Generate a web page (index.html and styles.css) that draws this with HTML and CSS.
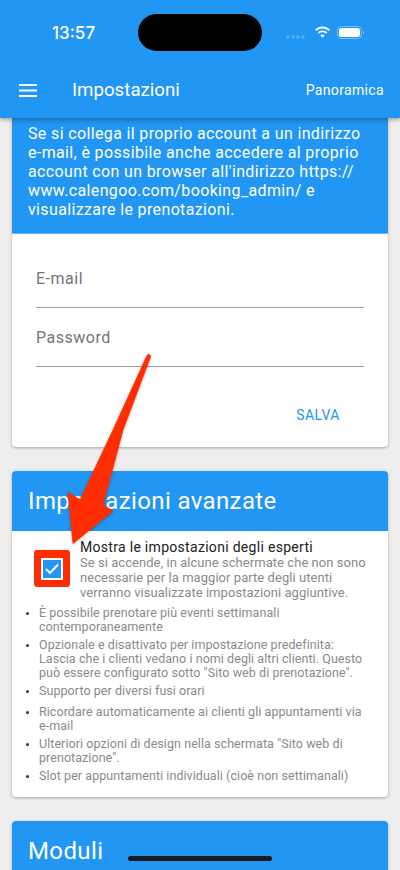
FILE: index.html
```html
<!DOCTYPE html>
<html lang="it">
<head>
<meta charset="utf-8">
<title>Impostazioni</title>
<link rel="stylesheet" href="styles.css">
</head>
<body>
<div class="screen">
  <header class="appbar">
    <div class="status">
      <span class="time">13:57</span>
      <div class="island"></div>
      <div class="status-icons">
        <svg class="signal" width="20" height="4" viewBox="0 0 20 4"><g fill="#fff" opacity=".25"><circle cx="2" cy="2" r="1.700"/><circle cx="7" cy="2" r="1.700"/><circle cx="12" cy="2" r="1.700"/><circle cx="17" cy="2" r="1.700"/></g></svg>
        <svg width="17" height="13" viewBox="0 0 17 13"><path d="M8.500 2.400c2.400 0 4.500.9 6.200 2.500l1.200-1.300C13.900 1.700 11.300.6 8.500.6S3.100 1.700 1.100 3.600l1.200 1.300C4 3.300 6.100 2.400 8.500 2.400zM8.500 6.300c1.300 0 2.500.5 3.500 1.400l1.200-1.300C12 5.200 10.300 4.500 8.500 4.500S5 5.200 3.800 6.400L5 7.700c1-.9 2.200-1.400 3.500-1.400zM8.500 8.400c-.9 0-1.600.3-2.200.9l2.200 2.400 2.200-2.400c-.6-.6-1.300-.9-2.200-.9z" fill="#fff"/></svg>
        <svg width="27" height="13" viewBox="0 0 27 13"><rect x=".5" y=".5" width="24" height="12" rx="3.800" fill="none" stroke="#fff" stroke-opacity=".4"/><rect x="2" y="2" width="21" height="9" rx="2.500" fill="#fff"/><path d="M26 4.800c.6.300 1 .9 1 1.700s-.4 1.400-1 1.700z" fill="#fff" fill-opacity=".4"/></svg>
      </div>
    </div>
    <div class="toolbar">
      <svg class="menu" width="18" height="13" viewBox="0 0 18 13"><path d="M0 0h18v2H0zM0 5.500h18v2H0zM0 11h18v2H0z" fill="#fff"/></svg>
      <h1 class="title">Impostazioni</h1>
      <span class="action">Panoramica</span>
    </div>
  </header>
  <main class="content">
    <section class="card card-first">
      <div class="card-info">Se si collega il proprio account a un indirizzo e-mail, è possibile anche accedere al proprio account con un browser all'indirizzo https://<br>www.calengoo.com/booking_admin/ e visualizzare le prenotazioni.</div>
      <form class="form">
        <div class="field">E-mail</div>
        <div class="field">Password</div>
        <div class="form-actions"><span class="save">SALVA</span></div>
      </form>
    </section>
    <section class="card">
      <h2 class="card-title">Impostazioni avanzate</h2>
      <div class="card-body">
        <div class="option">
          <div class="check-wrap">
            <span class="check"><svg width="14" height="12" viewBox="0 0 14 12"><path d="M1 6l4 4 8-8.500" fill="none" stroke="#fff" stroke-width="2"/></svg></span>
          </div>
          <div class="option-text">
            <div class="option-title">Mostra le impostazioni degli esperti</div>
            <div class="option-desc">Se si accende, in alcune schermate che non sono necessarie per la maggior parte degli utenti verranno visualizzate impostazioni aggiuntive.</div>
          </div>
        </div>
        <ul class="features">
          <li>È possibile prenotare più eventi settimanali contemporaneamente</li>
          <li>Opzionale e disattivato per impostazione predefinita: Lascia che i clienti vedano i nomi degli altri clienti. Questo può essere configurato sotto "Sito web di prenotazione".</li>
          <li class="single">Supporto per diversi fusi orari</li>
          <li>Ricordare automaticamente ai clienti gli appuntamenti via e-mail</li>
          <li>Ulteriori opzioni di design nella schermata "Sito web di prenotazione".</li>
          <li>Slot per appuntamenti individuali (cioè non settimanali)</li>
        </ul>
      </div>
    </section>
    <section class="card">
      <h2 class="card-title">Moduli</h2>
    </section>
  </main>
  <svg class="arrow" width="400" height="870" viewBox="0 0 400 870"><path d="M147 355.500Q149 353 150.800 356L123 430 103 505 113 511 73 543.500 68 492 80 500 113 430z" fill="#ff2d00" stroke="#ff2d00" stroke-width=".8" stroke-linejoin="round"/></svg>
  <div class="home-bar"></div>
</div>
</body>
</html>
```

FILE: styles.css
```css
* { box-sizing: border-box; }
html, body { margin: 0; padding: 0; }
body { font-family: Roboto, "Liberation Sans", sans-serif; background: #eeeeee; }
.screen { position: relative; width: 400px; height: 870px; overflow: hidden; display: flex; flex-direction: column; background: #eeeeee; }
.appbar { position: relative; z-index: 2; height: 118px; flex: none; background: #2196f3; color: #fff; box-shadow: 0 2px 4px rgba(0,0,0,.3); }
.status { position: relative; height: 64px; display: flex; align-items: center; }
.time { position: absolute; left: 52px; top: 24px; font-size: 17px; line-height: 18px; font-weight: 500; font-family: Inter, Roboto, sans-serif; }
.island { position: absolute; left: 138px; top: 14px; width: 124px; height: 37px; border-radius: 19px; background: #000; }
.status-icons { position: absolute; left: 286px; top: 26px; display: flex; align-items: center; gap: 6px; }
.signal { margin: 8px 2px 0 0; }
.toolbar { height: 52px; display: flex; align-items: center; padding: 0 16px 0 19px; }
.menu { flex: none; margin-top: 1px; }
.title { margin: 0 0 0 35px; font-size: 18.7px; font-weight: 400; flex: 1; }
.action { font-size: 14px; font-weight: 400; letter-spacing: .35px; }
.content { flex: 1; padding: 0 12px; min-height: 0; overflow: hidden; }
.card { background: #fff; border-radius: 4px; box-shadow: 0 1px 3px rgba(0,0,0,.3); margin-bottom: 24px; overflow: hidden; }
.card-first { border-radius: 0 0 4px 4px; }
.card-info { background: #2196f3; color: #fff; font-size: 16px; line-height: 19px; letter-spacing: .36px; padding: 6px 16px 15px; height: 116px; border-bottom: 1px solid #64b5f6; }
.form { height: 213px; padding: 24px 24px 0; }
.field { height: 50px; margin-bottom: 9px; border-bottom: 1px solid #9e9e9e; font-size: 16px; color: #757575; padding-top: 11px; line-height: 19px; letter-spacing: .5px; }
.form-actions { display: flex; justify-content: flex-end; padding: 31px 24px 0 0; }
.save { color: #2196f3; font-size: 14px; font-weight: 400; letter-spacing: .5px; }
.card-title { margin: 0; background: #2196f3; color: #fff; font-size: 24px; font-weight: 400; height: 60px; line-height: 60px; letter-spacing: .38px; padding-left: 16px; }
.card-body { padding: 8px 16px 0; height: 266px; }
.option { display: flex; gap: 10px; }
.check-wrap { width: 36px; height: 37px; margin: 11px 0 0 6px; flex: none; background: #ff2d00; border-radius: 3px; padding: 8px 7px 7px; }
.check { display: flex; align-items: center; justify-content: center; width: 22px; height: 22px; background: #2196f3; border: 2.5px solid #fff; }
.option-title { font-size: 14px; line-height: 16px; color: #212121; letter-spacing: .3px; }
.option-desc { font-size: 13px; line-height: 15px; color: #8a8a8a; letter-spacing: .05px; }
.features { margin: 6px 0 0; padding: 0 0 0 11px; font-size: 12.5px; line-height: 14px; color: #8a8a8a; letter-spacing: .06px; }
.features li { margin-bottom: 4px; }
.features li::marker { color: #333; font-size: 10px; }
.features .single { margin-bottom: 7px; }
.arrow { position: absolute; left: 0; top: 0; z-index: 3; pointer-events: none; filter: drop-shadow(0 1px 1.5px rgba(0,0,0,.25)); }
.home-bar { position: absolute; z-index: 4; left: 128px; top: 856px; width: 144px; height: 5px; border-radius: 3px; background: #1c1c1e; }
```
